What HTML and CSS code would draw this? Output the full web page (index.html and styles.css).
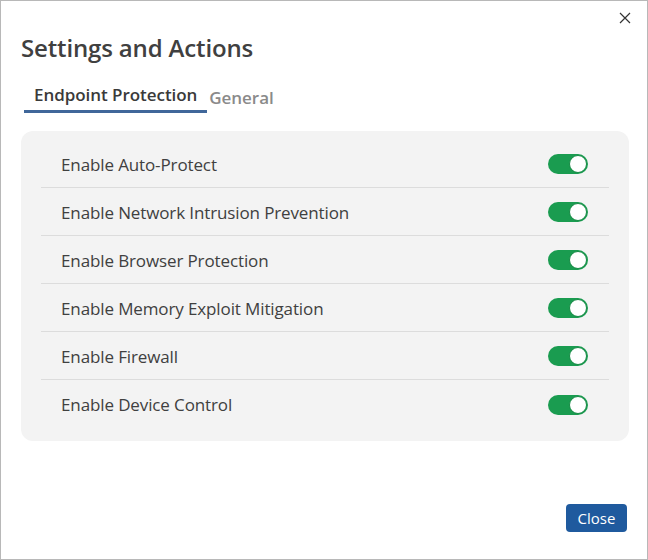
FILE: index.html
```html
<!DOCTYPE html>
<html>
<head>
<meta charset="utf-8">
<link rel="stylesheet" href="styles.css">
</head>
<body>
<div class="dialog">
  <button class="close-x" aria-label="close">
    <svg width="12" height="12" viewBox="0 0 12 12"><path d="M1 1 L11 11 M11 1 L1 11" stroke="#333" stroke-width="1.2" fill="none"/></svg>
  </button>
  <h1 class="title">Settings and Actions</h1>
  <div class="tabs">
    <div class="tab active">Endpoint Protection</div>
    <div class="tab">General</div>
  </div>
  <div class="panel">
    <div class="row"><span class="label">Enable Auto-Protect</span><span class="toggle"><span class="knob"></span></span></div>
    <div class="row"><span class="label">Enable Network Intrusion Prevention</span><span class="toggle"><span class="knob"></span></span></div>
    <div class="row"><span class="label">Enable Browser Protection</span><span class="toggle"><span class="knob"></span></span></div>
    <div class="row"><span class="label">Enable Memory Exploit Mitigation</span><span class="toggle"><span class="knob"></span></span></div>
    <div class="row"><span class="label">Enable Firewall</span><span class="toggle"><span class="knob"></span></span></div>
    <div class="row"><span class="label">Enable Device Control</span><span class="toggle"><span class="knob"></span></span></div>
  </div>
  <button class="btn-close">Close</button>
</div>
</body>
</html>
```
FILE: styles.css
```css
html, body {
  margin: 0;
  padding: 0;
  background: #fff;
}
body {
  font-family: "Open Sans", "Noto Sans", sans-serif;
  color: #3c3c3c;
}
.dialog {
  position: relative;
  width: 648px;
  height: 560px;
  box-sizing: border-box;
  border: 1px solid #b8b8b8;
  padding: 0 18px 27px 20px;
  display: flex;
  flex-direction: column;
}
.close-x {
  position: absolute;
  top: 10px;
  right: 15px;
  width: 14px;
  height: 14px;
  padding: 0;
  margin: 0;
  border: none;
  background: none;
  display: flex;
  align-items: center;
  justify-content: center;
}
.title {
  margin: 31px 0 0 0;
  font-size: 24px;
  font-weight: 600;
  line-height: 32px;
  color: #404040;
  letter-spacing: -0.15px;
}
.tabs {
  display: flex;
  align-items: flex-start;
  margin: 17px 0 0 3px;
}
.tab {
  font-size: 17px;
  font-weight: 600;
  line-height: 24px;
  letter-spacing: -0.05px;
  color: #8a8a8a;
  padding: 5px 2px 0 2px;
}
.tab.active {
  color: #3a3a3a;
  padding: 2px 10px 3px 10px;
  border-bottom: 3px solid #40679a;
}
.panel {
  margin-top: 18px;
  background: #f3f3f3;
  border-radius: 12px;
  padding: 9px 20px 13px 20px;
}
.row {
  height: 48px;
  box-sizing: border-box;
  display: flex;
  align-items: center;
  justify-content: space-between;
  padding: 1px 21px 0 20px;
  border-bottom: 1px solid #dcdcdc;
}
.row:last-child {
  border-bottom: none;
}
.label {
  font-size: 17px;
  letter-spacing: -0.12px;
  color: #404040;
}
.toggle {
  width: 40px;
  height: 20px;
  box-sizing: border-box;
  border-radius: 10px;
  background: #1a9c50;
  display: flex;
  align-items: center;
  justify-content: flex-end;
  padding: 0 1px;
}
.knob {
  width: 18px;
  height: 18px;
  box-sizing: border-box;
  border-radius: 50%;
  background: #fff;
  border: 1px solid #158a44;
}
.btn-close {
  margin-top: auto;
  align-self: flex-end;
  margin-right: 2px;
  width: 61px;
  height: 28px;
  border: none;
  border-radius: 4px;
  background: #1f5a9e;
  color: #fff;
  font-family: "Open Sans", "Noto Sans", sans-serif;
  font-size: 15px;
  padding: 0;
}
```
